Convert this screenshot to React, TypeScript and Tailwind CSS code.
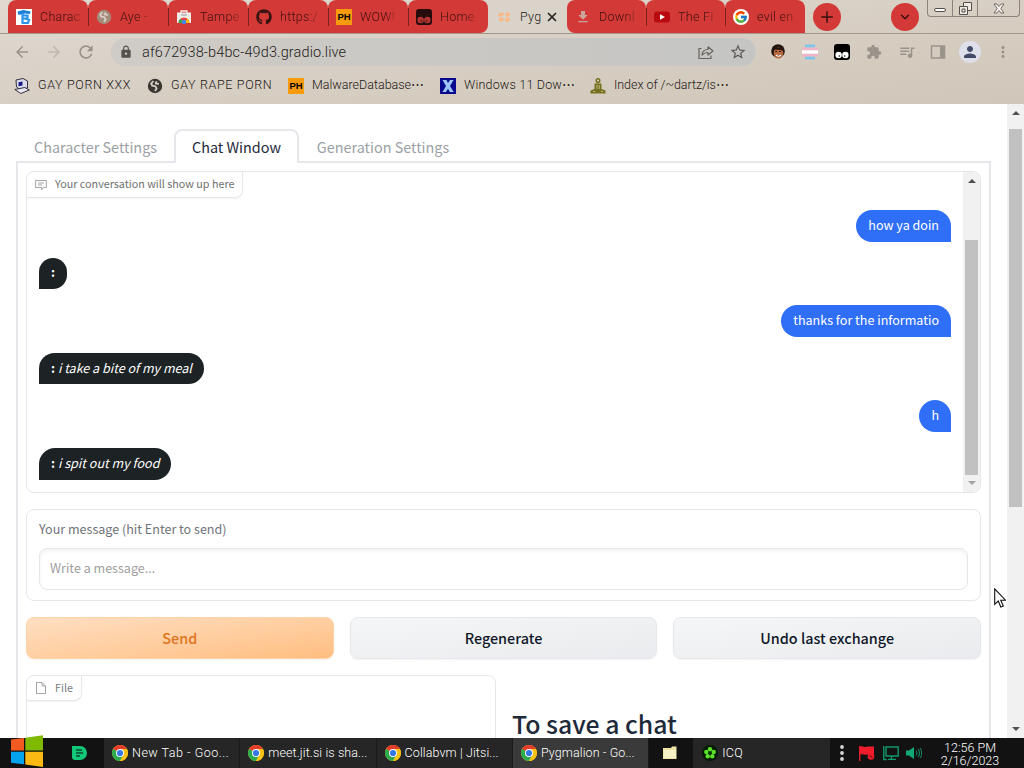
import React from 'react';
import { FcGoogle } from 'react-icons/fc';
import { FaGithub } from 'react-icons/fa';
import {
  MdArrowBack,
  MdArrowForward,
  MdDownload,
  MdExtension,
  MdLock,
  MdMoreVert,
  MdPerson,
  MdQueueMusic,
  MdRefresh,
  MdStarBorder,
} from 'react-icons/md';
import { ChevronDown, Plus, X } from 'lucide-react';

const GlobeIcon = ({ className }: { className?: string }) => (
  <svg viewBox="0 0 16 16" className={className}>
    <circle cx="8" cy="8" r="7.2" fill="currentColor" />
    <path
      d="M6.5 3.2L4.2 5.4l1 2.2 3.2.6 1.2 2.2-1.6 2.6M9.6 3.4l-.8 2 3 .8"
      fill="none"
      stroke="#d8d0c6"
      strokeWidth="1.8"
    />
  </svg>
);

const PhIcon = () => (
  <span className="flex h-4 w-4 shrink-0 items-center justify-center bg-[#f99b0c] font-['Liberation_Sans'] text-[9.5px] leading-none font-bold text-black">
    PH
  </span>
);

const CharacterIcon = () => (
  <svg viewBox="0 0 16 16" className="h-4 w-4 shrink-0">
    <path d="M0 0h16v16H0z" fill="#fff" />
    <path d="M1.5 2.5l6-1.5 7 1.5-.5 2.5-5-.5L2.5 6z" fill="#1c7fd6" />
    <path d="M6.5 4v10M7 6.5h4.5v3H7.5M9 9.5l4 1.5-1 3H5.5" fill="none" stroke="#2a93e8" strokeWidth="2.2" />
  </svg>
);

const StoreIcon = () => (
  <svg viewBox="0 0 16 16" className="h-4 w-4 shrink-0">
    <path d="M5 4V2h6v2" fill="none" stroke="#f3f0ee" strokeWidth="1.3" />
    <path d="M1 3.5h14V14H1z" fill="#efece9" />
    <path d="M2.5 14a5.5 5.5 0 0 1 11 0z" fill="#e8453c" />
    <path d="M2.5 14a5.5 5.5 0 0 1 2-4.2L8 14z" fill="#34a853" />
    <path d="M13.5 14a5.5 5.5 0 0 0-2-4.2L8 14z" fill="#fbbc05" />
    <circle cx="8" cy="13" r="2.2" fill="#4285f4" />
    <path d="M5 6h6" stroke="#999" />
  </svg>
);

const TampermonkeyIcon = ({ className }: { className?: string }) => (
  <svg viewBox="0 0 16 16" className={className}>
    <rect width="16" height="16" rx="3" fill="currentColor" />
    <circle cx="4.6" cy="11" r="3.2" fill="var(--eye)" />
    <circle cx="11.4" cy="11" r="3.2" fill="var(--eye)" />
    <circle cx="5.3" cy="12" r=".7" fill="currentColor" />
    <circle cx="10.7" cy="12" r=".7" fill="currentColor" />
  </svg>
);

const GradioIcon = () => (
  <svg viewBox="0 0 16 16" className="h-4 w-4 shrink-0">
    <path d="M1 6l5-3 2.500 2.500L4 8zM9 4.500l3-1.500 2.500 3-4 2.500zM2 10.500l4-2.500 2.500 2.500-4 2.500zM8.500 10.500l4-2.500 2 2.500-3.500 3z" fill="#f8b98a" />
  </svg>
);

const YoutubeIcon = () => (
  <svg viewBox="0 0 16 16" className="h-4 w-4 shrink-0">
    <rect x="0" y="2.5" width="16" height="11" rx="3" fill="#b80a10" />
    <path d="M6 5.2v5.6L11 8z" fill="#fff" />
  </svg>
);

const ComputerIcon = () => (
  <svg viewBox="0 0 16 16" className="h-4 w-4">
    <path d="M2 2L9 .5l4.5 2.5v7L6 11.5 2.5 9z" fill="#dcdcec" stroke="#22202c" strokeWidth=".9" />
    <path d="M4.5 4.2l4-.8v4l-4 .8z" fill="#1a1a8c" />
    <path d="M.8 11.500l10-2 4.500 2.500-8.500 3.500z" fill="#e8e6f0" stroke="#22202c" strokeWidth=".9" />
  </svg>
);

const XIcon = () => (
  <svg viewBox="0 0 16 16" className="h-4 w-4">
    <path d="M0 0h16v16H0z" fill="#0a0a8e" />
    <path d="M2.5 2h4L8 5l2-3h3.5l-3.5 6 3.7 6H9.8L8 10.8 6 14H2.5L6 8z" fill="#9cc4f4" />
  </svg>
);

const StatueIcon = () => (
  <svg viewBox="0 0 16 16" className="h-4 w-4">
    <circle cx="8" cy="2.6" r="1.8" fill="none" stroke="#77711f" strokeWidth="1.5" />
    <path d="M4.5 5.5h7v5.5l4 1.5v3H.5v-3l4-1.500z" fill="#77711f" />
    <path d="M7 7v4M9.3 7v4M3 13.5h2M11 13.5h2" stroke="#cfc59a" strokeWidth=".8" />
  </svg>
);

const ShareIcon = () => (
  <svg viewBox="0 0 16 16" className="h-4 w-4" fill="none" stroke="#68645f" strokeWidth="1.2">
    <path d="M3.5 4.5H1v10h12v-3" />
    <path d="M4 11c.3-3.5 2.5-5.5 6-5.5V2.8L15 7l-5 4V8.5C7.2 8.5 5.5 9.2 4 11z" strokeLinejoin="round" />
  </svg>
);

const FaceIcon = () => (
  <svg viewBox="0 0 16 16" className="h-4 w-4">
    <circle cx="8" cy="7" r="6.8" fill="#241510" />
    <ellipse cx="8.5" cy="9" rx="4.8" ry="5.6" fill="#b8683f" />
    <path d="M6 11c1.5 1.3 3.5 1.3 5 0" stroke="#fff" strokeWidth="1.2" />
    <path d="M5.3 7.5h1.6M9.2 7.5h1.6" stroke="#2a130b" strokeWidth="1.2" />
    <path d="M3 4c3 2 6-.5 10 2" stroke="#241510" strokeWidth="2" fill="none" />
  </svg>
);

const FlagIcon = () => (
  <svg viewBox="0 0 16 16" className="h-4 w-4">
    <path d="M3 .5h10v3H3zM3 12.5h10v3H3z" fill="#7cc6ec" />
    <path d="M0 3.5h16v3H0zM0 9.5h16v3H0z" fill="#f0b3c8" />
    <path d="M0 6.3h16v3.4H0z" fill="#fff" />
  </svg>
);

const ChromeIcon = () => (
  <svg viewBox="0 0 16 16" className="h-4 w-4 shrink-0">
    <circle cx="8" cy="8" r="8" fill="#fbc116" />
    <path d="M8 8L1.1 4A8 8 0 0 1 14.9 4z" fill="#e33b2e" />
    <path d="M8 8L1.1 4A8 8 0 0 0 8 16l3.4-6z" fill="#2da94f" />
    <path d="M8 4h6.9A8 8 0 0 1 8 16l3.5-6z" fill="#fbc116" />
    <circle cx="8" cy="8" r="4" fill="#fff" />
    <circle cx="8" cy="8" r="3.1" fill="#3578e5" />
  </svg>
);

const WindowsLogo = () => (
  <svg viewBox="0 0 32 32" className="h-8 w-8">
    <path d="M0 4.5L13 3v12.5H0z" fill="#f25a22" />
    <path d="M14.3 2.8L32 .3v15.2H14.3z" fill="#7fba00" />
    <path d="M0 16.7h13v12.5L0 27.8z" fill="#05a3ee" />
    <path d="M14.3 16.7H32V32l-17.7-2.6z" fill="#fdb913" />
  </svg>
);

interface BrowserTab {
  title: string;
  icon: React.ReactNode;
  active?: boolean;
  divider?: boolean;
  width: string;
  corner?: string;
}

const tabs: BrowserTab[] = [
  { title: 'Charac', icon: <CharacterIcon />, width: 'w-20' },
  { title: 'Aye - ', icon: <GlobeIcon className="h-4 w-4 shrink-0 text-[#a48a78]" />, divider: true, width: 'w-20' },
  { title: 'Tampe', icon: <StoreIcon />, divider: true, width: 'w-20' },
  { title: 'https:/', icon: <FaGithub className="h-4 w-4 shrink-0 text-[#3b1413]" />, divider: true, width: 'w-20' },
  { title: 'WOW!', icon: <PhIcon />, divider: true, width: 'w-20' },
  {
    title: 'Home',
    icon: <TampermonkeyIcon className="h-4 w-4 shrink-0 text-[#260d0d] [--eye:#b33430]" />,
    divider: true,
    width: 'w-20',
    corner: 'rounded-br-lg',
  },
  { title: 'Pyg', icon: <GradioIcon />, active: true, width: 'w-[79px]' },
  {
    title: 'Downl',
    icon: <MdDownload className="h-4 w-4 shrink-0 text-[#c9a59c]" />,
    width: 'w-[79px]',
    corner: 'rounded-bl-lg',
  },
  { title: 'The FI', icon: <YoutubeIcon />, divider: true, width: 'w-[79px]' },
  {
    title: 'evil en',
    icon: (
      <span className="flex h-4 w-4 shrink-0 items-center justify-center rounded-full bg-white">
        <FcGoogle className="h-3.5 w-3.5" />
      </span>
    ),
    divider: true,
    width: 'w-20',
  },
];

const bookmarks = [
  { title: 'GAY PORN XXX', icon: <ComputerIcon />, width: 'w-[133px]', tracking: 'tracking-[0.65px]' },
  { title: 'GAY RAPE PORN', icon: <GlobeIcon className="h-4 w-4 text-[#3a3733]" />, width: 'w-[141px]', tracking: 'tracking-[0.65px]' },
  { title: 'MalwareDatabase⋯', icon: <PhIcon />, width: 'w-[152px]', tracking: 'tracking-[0px]' },
  { title: 'Windows 11 Dow⋯', icon: <XIcon />, width: 'w-[150px]', tracking: 'tracking-[0.2px]' },
  { title: 'Index of /~dartz/is⋯', icon: <StatueIcon />, width: 'w-[160px]', tracking: 'tracking-[-0.05px]' },
];

const messages = [
  { from: 'user', text: 'how ya doin' },
  { from: 'bot', text: '' },
  { from: 'user', text: 'thanks for the informatio' },
  { from: 'bot', text: 'i take a bite of my meal' },
  { from: 'user', text: 'h' },
  { from: 'bot', text: 'i spit out my food' },
];

const tasks = [
  { title: 'New Tab - Goo...', bg: 'bg-[#262626]', tracking: 'tracking-[0.5px]' },
  { title: 'meet.jit.si is sha...', bg: 'bg-[#262626]', tracking: 'tracking-[0.1px]' },
  { title: 'Collabvm | Jitsi...', bg: 'bg-[#262626]', tracking: 'tracking-[0.1px]' },
  { title: 'Pygmalion - Go...', bg: 'bg-[#3a3a3a]', tracking: 'tracking-[0.1px]' },
];

const TabStrip = () => (
  <div className="flex h-[33px] shrink-0 pl-2">
    {tabs.map(tab => (
      <div
        key={tab.title}
        className={`relative flex shrink-0 items-center rounded-t-lg pt-px pl-2 ${tab.width} ${
          tab.active ? 'bg-[#dad3ca]' : 'bg-[#d33a37]'
        } ${tab.corner ?? ''}`}
      >
        {tab.divider && <div className="absolute top-2 left-0 h-[18px] w-px bg-[#7a2220]" />}
        {tab.icon}
        <span
          className={`ml-2 text-[12.5px] tracking-[0.3px] whitespace-nowrap ${
            tab.active
              ? 'w-[19px] text-[#1f1b18]'
              : 'bg-linear-to-r from-[#3d0f0d] from-70% to-[#3d0f0d60] bg-clip-text text-transparent'
          }`}
        >
          {tab.title}
        </span>
        {tab.active && <X className="ml-[6px] h-3.5 w-3.5 shrink-0 text-[#2a2624]" strokeWidth={3} />}
      </div>
    ))}
    <div className="mt-[3px] ml-2 flex h-7 w-7 items-center justify-center rounded-full bg-[#d33a37]">
      <Plus className="h-[18px] w-[18px] text-[#3b1010]" />
    </div>
    <div className="mt-[3px] ml-[50px] flex h-7 w-7 items-center justify-center rounded-full bg-[#d33a37]">
      <ChevronDown className="h-3.5 w-3.5 text-[#3b1010]" strokeWidth={2.5} />
    </div>
    <div className="ml-2 flex h-[17px] w-[93px] divide-x divide-[#8b837b] rounded-b border border-t-0 border-[#8b837b]">
      <div className="flex w-[25px] items-center justify-center pt-1">
        <div className="h-1 w-3 rounded-xs border border-[#55504b] bg-white" />
      </div>
      <div className="flex w-[25px] items-center justify-center">
        <svg viewBox="0 0 13 13" className="h-[13px] w-[13px]" fill="#eee9e3" stroke="#55504b">
          <path d="M4.5.5h8v8h-8z" />
          <path d="M.5 4.5h8v8h-8zM3 7h3v3H3z" />
        </svg>
      </div>
      <div className="flex flex-1 items-center justify-center">
        <svg viewBox="0 0 12 11" className="h-[11px] w-3" fill="#f5f1ec" stroke="#55504b" strokeWidth=".8">
          <path d="M1 1h3l2 2.5L8 1h3L7.8 5.5 11 10H8L6 7.5 4 10H1L4.2 5.5z" />
        </svg>
      </div>
    </div>
  </div>
);

const Toolbar = () => (
  <div className="flex h-[37px] shrink-0 items-center border-t border-[#a5978c] pl-[13px]">
    <MdArrowBack className="h-[18px] w-[18px] text-[#9b938b]" />
    <MdArrowForward className="ml-[14px] h-[18px] w-[18px] text-[#bfb8b0]" />
    <MdRefresh className="ml-[13px] h-5 w-5 text-[#9b938b]" />
    <div className="ml-[15px] flex h-7 w-[645px] items-center rounded-full bg-linear-to-r from-[#cfcbc6] to-[#c5c5c3] pl-2">
      <MdLock className="h-[14px] w-[14px] shrink-0 text-[#55514d]" />
      <span className="ml-[9px] w-[556px] shrink-0 pt-px text-[14.5px] tracking-[0.12px] text-[#1f1c1a]">
        af672938-b4bc-49d3.gradio.live
      </span>
      <span className="mr-[15px] shrink-0">
        <ShareIcon />
      </span>
      <MdStarBorder className="h-[18px] w-[18px] shrink-0 text-[#5f5b57]" />
    </div>
    <div className="ml-[14px] flex items-center gap-4">
      <FaceIcon />
      <FlagIcon />
      <span className="rounded bg-white">
        <TampermonkeyIcon className="h-4 w-4 text-black [--eye:#fff]" />
      </span>
      <MdExtension className="h-4 w-4 text-[#9a938b]" />
      <MdQueueMusic className="-mr-0.5 h-[18px] w-[18px] text-[#9a938b]" />
      <svg viewBox="0 0 16 16" className="h-4 w-4" fill="none" stroke="#9a938b" strokeWidth="1.5">
        <path d="M1.5 2h13v12h-13z" />
        <path d="M12 2v12" strokeWidth="4" />
      </svg>
    </div>
    <div className="ml-[13px] flex h-[22px] w-[22px] items-center justify-center rounded-full bg-[#dfdfea]">
      <MdPerson className="h-[18px] w-[18px] text-[#414a66]" />
    </div>
    <MdMoreVert className="ml-[13px] h-[18px] w-[18px] text-[#9a938b]" />
  </div>
);

const BookmarksBar = () => (
  <div className="flex h-[34px] shrink-0 items-center pb-[3px] pl-[14px]">
    {bookmarks.map(item => (
      <div key={item.title} className={`flex shrink-0 items-center gap-2 ${item.width}`}>
        <span className="h-4 w-4 shrink-0">{item.icon}</span>
        <span className={`text-[12.5px] whitespace-nowrap text-[#1c1815] ${item.tracking}`}>{item.title}</span>
      </div>
    ))}
  </div>
);

const Arrow = ({ down, className }: { down?: boolean; className?: string }) => (
  <svg viewBox="0 0 8 4" className={`h-1 w-2 shrink-0 ${className ?? ''}`} fill="currentColor">
    <path d={down ? 'M0 0h8L4 4z' : 'M0 4h8L4 0z'} />
  </svg>
);

const ChatBox = () => (
  <div className="relative flex h-[322px] shrink-0 overflow-hidden rounded-lg border border-gray-200 bg-white">
    <div className="absolute top-0 left-0 flex h-[26px] w-[216px] items-center rounded-br-lg border-r border-b border-gray-200 pl-[8px] text-[#707070] shadow-xs">
      <svg viewBox="0 0 12 12" className="h-3 w-3" fill="none" stroke="#9a9a9a" strokeWidth=".9">
        <path d="M.6 1.5h10.8v7H8.5L6.8 10.8V8.5H.6zM3 4h6M3 6h4" />
      </svg>
      <span className="ml-2 text-[10.75px] whitespace-nowrap">Your conversation will show up here</span>
    </div>
    <div className="flex flex-1 flex-col gap-[16px] pt-[38px] pr-3 pl-3">
      {messages.map((msg, i) => (
        <div
          key={i}
          className={`flex h-[31.6px] shrink-0 items-center rounded-2xl px-3 pb-px text-[12.55px] whitespace-pre text-white ${
            msg.from === 'user' ? 'self-end rounded-br-none bg-[#2f6ff7]' : 'self-start rounded-bl-none bg-[#1d2224]'
          }`}
        >
          {msg.from === 'bot' ? (
            <>
              <b>:</b>
              {msg.text && <em> {msg.text}</em>}
            </>
          ) : (
            msg.text
          )}
        </div>
      ))}
    </div>
    <div className="flex w-[17px] flex-col items-center bg-[#f1f1f1]">
      <Arrow className="mt-[7px] text-[#505050]" />
      <div className="mt-[57px] h-[235px] w-[13px] shrink-0 bg-[#c1c1c1]" />
      <Arrow down className="mt-[6px] text-[#a3a3a3]" />
    </div>
  </div>
);

const ChatPage = () => (
  <div className="flex flex-1 flex-col overflow-hidden pt-[25px] pr-4 pl-4 font-['Noto_Sans_CJK_SC',sans-serif]">
    <div className="relative z-10 -mb-0.5 flex h-[34px] shrink-0 text-[14.4px] text-[#9b9fa5]">
      <div className="flex w-[158px] items-center justify-center pt-0.5 pl-px">Character Settings</div>
      <div className="flex w-[125px] items-center justify-center rounded-t-lg border-2 border-b-0 border-gray-200 bg-white text-gray-800">
        Chat Window
      </div>
      <div className="flex w-[168px] items-center justify-center pt-0.5">Generation Settings</div>
    </div>
    <div className="flex h-[700px] shrink-0 flex-col gap-4 border-2 border-gray-200 p-2">
      <ChatBox />
      <div className="flex h-[92px] shrink-0 flex-col rounded-lg border border-gray-200 px-3 pt-[9px]">
        <label className="text-[12.55px] leading-5 text-[#70747a]">Your message (hit Enter to send)</label>
        <div className="mt-[9px] flex h-[42px] shrink-0 items-center rounded-lg border border-gray-200 px-2.5 pb-px text-[12.55px] text-[#a0a0a0] shadow-[inset_0_2px_4px_rgba(0,0,0,0.05)]">
          Write a message...
        </div>
      </div>
      <div className="grid h-[42px] shrink-0 grid-cols-3 gap-4 text-[14.4px] font-medium">
        <button className="rounded-lg border border-[#ffd3a8] bg-linear-to-br from-[#ffdfc2] to-[#ffbe80] text-[#dd7420] shadow-xs">
          Send
        </button>
        <button className="rounded-lg border border-gray-200 bg-linear-to-br from-[#f5f6f7] to-[#e9ebee] text-gray-900 shadow-xs">
          Regenerate
        </button>
        <button className="rounded-lg border border-gray-200 bg-linear-to-br from-[#f5f6f7] to-[#e9ebee] text-gray-900 shadow-xs">
          Undo last exchange
        </button>
      </div>
      <div className="flex gap-4">
        <div className="h-[200px] w-[470px] rounded-lg border border-gray-200">
          <div className="flex h-[25px] w-[55px] items-center rounded-br-lg border-r border-b border-gray-200 pl-[8px] text-[10.75px] text-[#7a7a80] shadow-xs">
            <svg viewBox="0 0 12 12" className="h-3 w-3" fill="none" stroke="#9a9a9a" strokeWidth=".9">
              <path d="M1.5.5H7L10.5 4v7.5h-9zM7 .5V4h3.5" />
            </svg>
            <span className="ml-2">File</span>
          </div>
        </div>
        <h2 className="pt-[34px] text-[24.8px] leading-[28px] font-medium text-gray-800">To save a chat</h2>
      </div>
    </div>
  </div>
);

const Taskbar = () => (
  <div className="flex h-[30px] shrink-0 bg-[#121212] text-[12.5px] text-white">
    <div className="-mt-[3px] w-[72px] shrink-0 pl-[11px]">
      <WindowsLogo />
    </div>
    <div className="flex w-8 shrink-0 items-center">
      <svg viewBox="0 0 15 14" className="h-[14px] w-[15px]">
        <path d="M0 0h8a7 7 0 0 1 0 14H3a3 3 0 0 1-3-3z" fill="#12c878" />
        <path d="M4 4h6M4 7h7M4 10h4" stroke="#084a30" strokeWidth="1.3" />
      </svg>
    </div>
    {tasks.map(task => (
      <div
        key={task.title}
        className={`flex w-[136.3px] shrink-0 items-center border-r border-[#1a1a1a] pl-2 ${task.bg}`}
      >
        <ChromeIcon />
        <span className={`ml-1 whitespace-nowrap ${task.tracking}`}>{task.title}</span>
      </div>
    ))}
    <div className="flex w-[44px] shrink-0 items-center pl-[14px]">
      <svg viewBox="0 0 14 14" className="h-[14px] w-[14px]">
        <path d="M0 2h8l1-1.5h4.5V13H0z" fill="#efe6a5" />
        <path d="M1 4h12v8H1z" fill="#f6f1c4" />
      </svg>
    </div>
    <div className="flex w-[137px] shrink-0 items-center bg-[#262626] pl-[9px]">
      <svg viewBox="0 0 16 16" className="h-4 w-4">
        <circle cx="8" cy="8" r="8" fill="#031a03" />
        <g fill="#5be32a">
          <circle cx="8" cy="4.2" r="2.2" />
          <circle cx="11.7" cy="7" r="2.2" />
          <circle cx="10.3" cy="11.3" r="2.2" />
          <circle cx="5.7" cy="11.3" r="2.2" />
          <circle cx="4.3" cy="7" r="2.2" />
        </g>
        <circle cx="8" cy="8.2" r="1.3" fill="#0a3a0a" />
      </svg>
      <span className="ml-1 tracking-[0.3px]">ICQ</span>
    </div>
    <div className="flex flex-1 items-center pl-[10px]">
      <svg viewBox="0 0 4 16" className="h-4 w-1 shrink-0" fill="#d5d5d5">
        <circle cx="2" cy="2" r="1.9" />
        <circle cx="2" cy="8" r="1.9" />
        <circle cx="2" cy="14" r="1.9" />
      </svg>
      <svg viewBox="0 0 16 16" className="ml-[15px] h-4 w-4 shrink-0">
        <path d="M.7 1v15" stroke="#e01e2c" strokeWidth="1.4" />
        <path d="M1 1.5c3-1 4 .8 7 .5v-.5h7V9.5H8c-3 1-4-1-7 0z" fill="#f01c2c" />
        <circle cx="12" cy="11.5" r="3.3" fill="#f01c2c" />
        <path d="M10.5 10l3 3" stroke="#5a0a10" />
      </svg>
      <svg viewBox="0 0 16 16" className="ml-2 h-4 w-4 shrink-0" fill="none" stroke="#12996a" strokeWidth="1.4">
        <path d="M3 2h12.2v9H3zM.8 1v13.5h3M8.5 11v3M5 14.4h8" />
      </svg>
      <svg viewBox="0 0 16 16" className="ml-[7px] h-4 w-4 shrink-0">
        <path d="M0 5.5h3L8 2v12L3 10.5H0z" fill="#12a873" />
        <path d="M10 5.5c1.3 1.5 1.3 3.5 0 5M12 4c2 2.5 2 5.5 0 8M14 3c2.300 3 2.300 7 0 10" fill="none" stroke="#12996a" />
      </svg>
    </div>
    <div className="w-[101px] shrink-0 pt-[3px] pr-[7px] text-center text-[12.5px] leading-[13px]">
      <div>12:56 PM</div>
      <div>2/16/2023</div>
    </div>
  </div>
);

const App: React.FC = () => (
  <div className="relative flex h-[768px] w-[1024px] flex-col overflow-hidden bg-white font-['Roboto',sans-serif] font-light">
    <div className="flex h-[104px] shrink-0 flex-col bg-linear-to-br from-[#e0dad2] via-[#d8cfc4] to-[#d0c6b9]">
      <TabStrip />
      <Toolbar />
      <BookmarksBar />
    </div>
    <div className="flex h-[634px] shrink-0 overflow-hidden font-normal">
      <ChatPage />
      <div className="flex w-[17px] shrink-0 flex-col items-center bg-[#f1f1f1]">
        <Arrow className="mt-[7px] text-[#505050]" />
        <div className="mt-[14px] h-[378px] w-[13px] bg-[#c1c1c1]" />
        <Arrow down className="mt-auto mb-[7px] text-[#505050]" />
      </div>
    </div>
    <Taskbar />
    <svg viewBox="0 0 12 20" className="absolute top-[588px] left-[994px] h-5 w-3">
      <path d="M.7.8v15.5l3.6-3.3 2.5 6 2.5-1-2.5-5.8h4.7z" fill="#fff" stroke="#111" strokeWidth="1.1" />
    </svg>
  </div>
);

export default App;
